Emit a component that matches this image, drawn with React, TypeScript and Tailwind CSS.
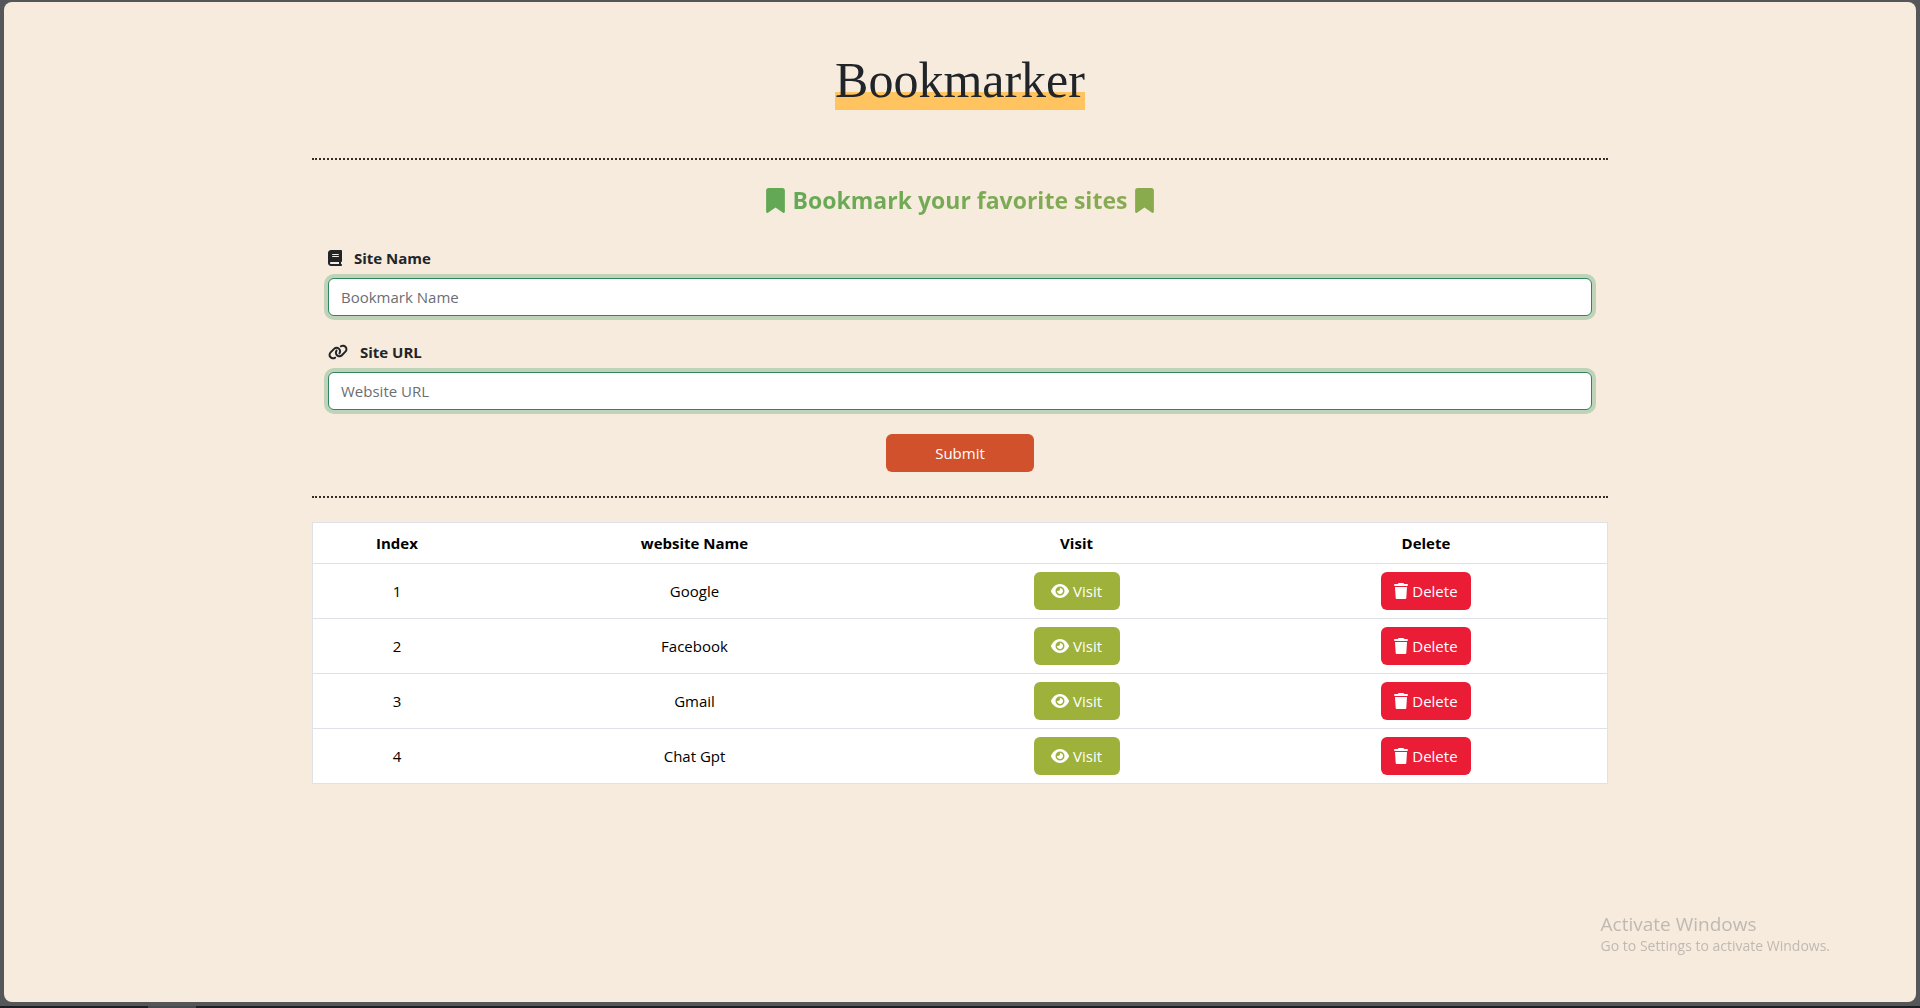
import React, { useState } from "react";
import { FaBook, FaBookmark, FaEye, FaLink } from "react-icons/fa6";

const initialSites = [
  { name: "Google", url: "https://google.com" },
  { name: "Facebook", url: "https://facebook.com" },
  { name: "Gmail", url: "https://gmail.com" },
  { name: "Chat Gpt", url: "https://chat.openai.com" },
];

const inputClass =
  "block h-[38px] w-full rounded-md border border-[#2e8560] bg-white px-3 text-[15px] text-[#212529] outline-none ring-4 ring-[#bfd3b9] placeholder:text-[#6a6f74]";

function Divider() {
  return <hr className="border-0 border-t-2 border-dotted border-[#332c27]" />;
}

function TrashIcon() {
  return (
    <svg viewBox="0 0 14 16" className="h-4 w-[14px]" fill="currentColor" aria-hidden="true">
      <path d="M4.2.5 4.6 0h4.8l.4.5.5.6H13a1 1 0 0 1 0 2H1a1 1 0 0 1 0-2h2.7z" />
      <path d="M1 4h12l-.7 11.1a1 1 0 0 1-1 .9H2.7a1 1 0 0 1-1-.9z" />
    </svg>
  );
}

export default function App() {
  const [sites, setSites] = useState(initialSites);
  const [name, setName] = useState("");
  const [url, setUrl] = useState("");

  const addSite = (event: React.FormEvent) => {
    event.preventDefault();
    if (!name || !url) return;
    setSites([...sites, { name, url }]);
    setName("");
    setUrl("");
  };

  return (
    <div className="flex min-h-screen flex-col bg-[#54565a] font-['Open_Sans','Noto_Sans',sans-serif] text-[15px] leading-6 text-[#212529]">
      <main className="mx-1 mt-0.5 mb-1 flex-1 rounded-lg bg-[#f7ebdd]">
        <div className="mx-auto max-w-[1320px] px-3">
          <h1 className="pt-12 pb-12 text-center font-['Liberation_Serif',serif] text-[50px] leading-[60px]">
            <span className="inline-block bg-linear-to-t from-[#ffc45f] from-30% to-transparent to-30%">
              Bookmarker
            </span>
          </h1>
          <Divider />
          <h2 className="mt-6 flex items-center justify-center gap-2 text-[23px] leading-8 font-bold">
            <FaBookmark className="h-[25px] w-[19px] text-[#62a855]" aria-hidden="true" />
            <span className="bg-linear-to-r from-[#65a956] to-[#88ab52] bg-clip-text text-transparent">
              Bookmark your favorite sites
            </span>
            <FaBookmark className="h-[25px] w-[19px] text-[#8aaa4e]" aria-hidden="true" />
          </h2>
          <form className="px-4 pt-[30px] pb-6" onSubmit={addSite}>
            <label htmlFor="site-name" className="mb-2 flex items-center gap-3 font-bold">
              <FaBook className="h-4 w-[14px]" aria-hidden="true" />
              Site Name
            </label>
            <input
              id="site-name"
              type="text"
              placeholder="Bookmark Name"
              value={name}
              onChange={(e) => setName(e.target.value)}
              className={inputClass}
            />
            <label htmlFor="site-url" className="mt-6 mb-2 flex items-center gap-3 font-bold">
              <FaLink className="h-4 w-5" aria-hidden="true" />
              Site URL
            </label>
            <input
              id="site-url"
              type="text"
              placeholder="Website URL"
              value={url}
              onChange={(e) => setUrl(e.target.value)}
              className={inputClass}
            />
            <button
              type="submit"
              className="mx-auto mt-6 block h-[38px] min-w-[148px] rounded-md bg-[#d1512d] px-12 text-white"
            >
              Submit
            </button>
          </form>
          <Divider />
          <table className="mt-6 w-full table-fixed border-collapse border border-[#dee2e6] bg-white text-center text-black">
            <colgroup>
              <col className="w-[13%]" />
              <col className="w-[33%]" />
              <col className="w-[26%]" />
              <col className="w-[28%]" />
            </colgroup>
            <thead>
              <tr className="border-b border-[#dee2e6]">
                <th className="p-2">Index</th>
                <th className="p-2">website Name</th>
                <th className="p-2">Visit</th>
                <th className="p-2">Delete</th>
              </tr>
            </thead>
            <tbody>
              {sites.map((site, i) => (
                <tr key={i} className="border-b border-[#dee2e6]">
                  <td className="p-2">{i + 1}</td>
                  <td className="p-2">{site.name}</td>
                  <td className="p-2">
                    <a
                      href={site.url}
                      className="mx-auto flex h-[38px] w-fit min-w-[86px] items-center justify-center gap-1 rounded-md bg-[#9eb23b] px-4 text-white"
                    >
                      <FaEye className="h-4 w-[18px]" aria-hidden="true" />
                      Visit
                    </a>
                  </td>
                  <td className="p-2">
                    <button
                      type="button"
                      onClick={() => setSites(sites.filter((_, j) => j !== i))}
                      className="mx-auto flex h-[38px] min-w-[90px] items-center justify-center gap-1 rounded-md bg-[#eb1d36] px-3 text-white"
                    >
                      <TrashIcon />
                      Delete
                    </button>
                  </td>
                </tr>
              ))}
            </tbody>
          </table>
        </div>
      </main>
      <footer className="h-0.5 bg-[#1e1e20]">
        <div className="ml-[148px] h-full w-12 bg-[#48494b]" />
      </footer>
      <aside className="pointer-events-none fixed right-[90px] bottom-[52px] text-[#c0b9b2]">
        <p className="text-[19px] leading-6">Activate Windows</p>
        <p className="text-sm leading-5">Go to Settings to activate Windows.</p>
      </aside>
    </div>
  );
}
